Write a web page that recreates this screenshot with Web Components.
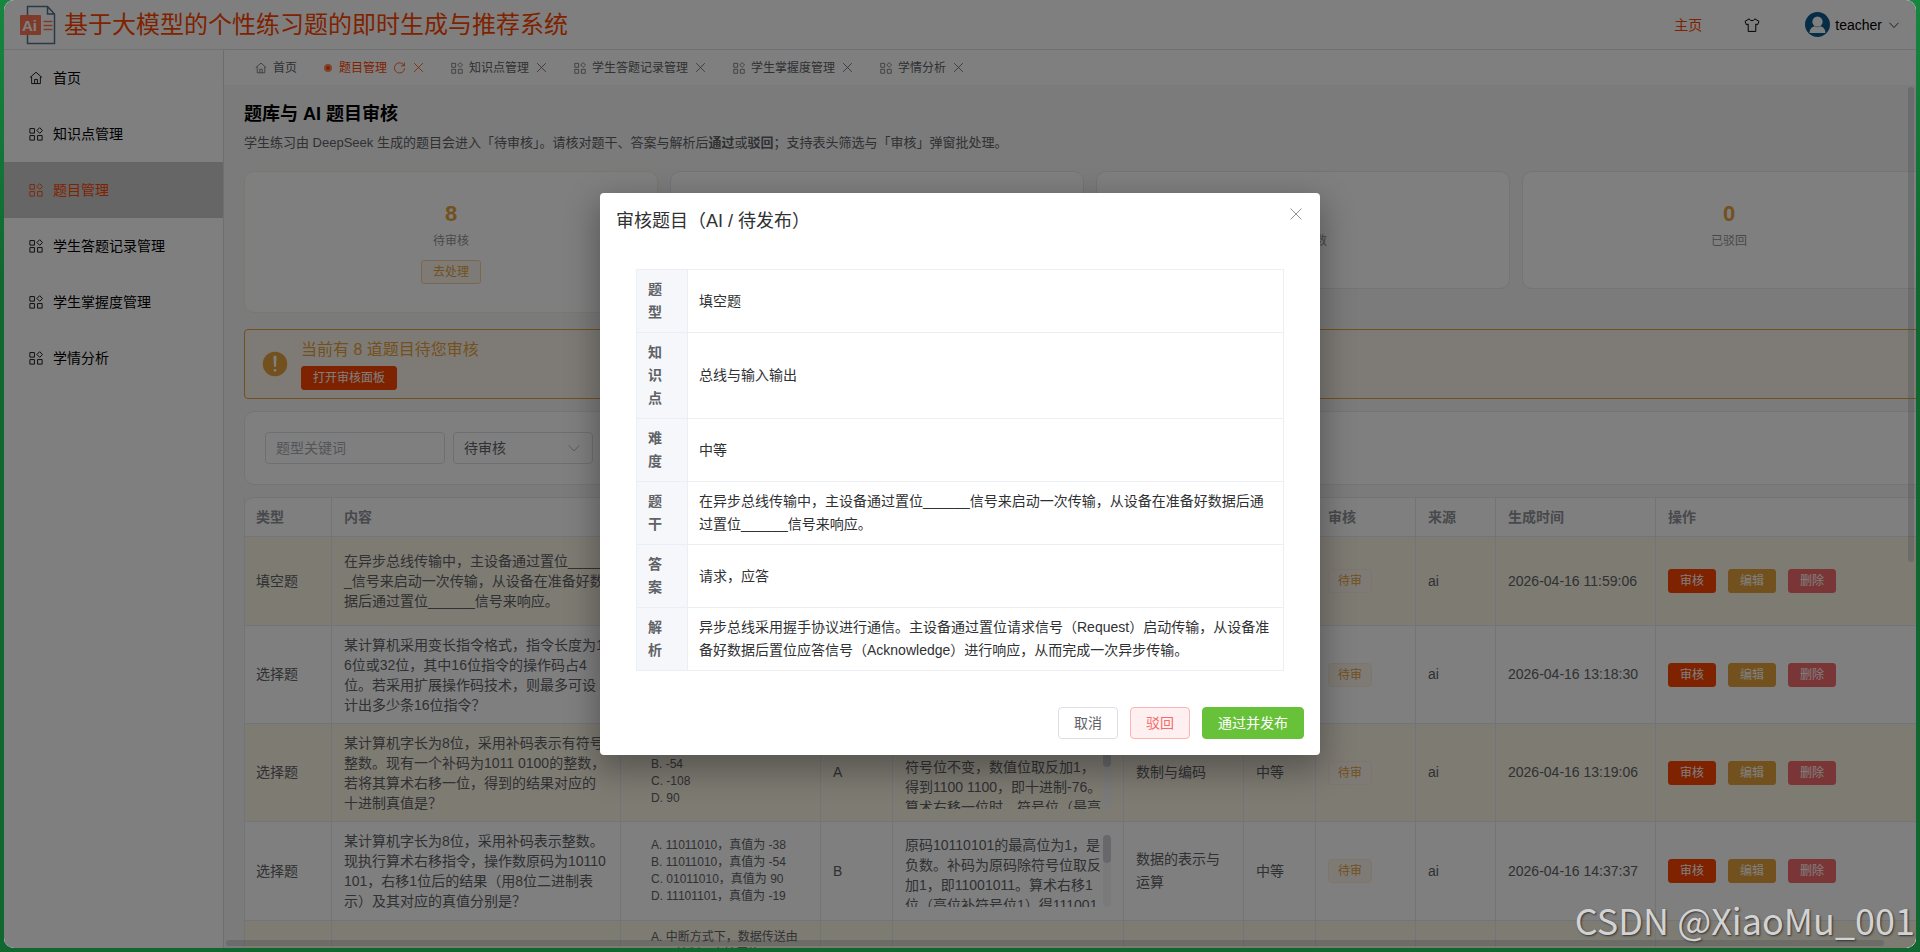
<!DOCTYPE html>
<html lang="zh-CN">
<head>
<meta charset="utf-8">
<title>题目管理</title>
<style>
  body {
    margin: 0;
    height: 100vh;
    overflow: hidden;
    background: linear-gradient(#15873f, #10672f 30%);
    font-family: "Liberation Sans", "Noto Sans CJK SC", sans-serif;
    font-size: 14px;
    line-height: 20px;
    color: #606266;
    --primary: #ff4500;
    --warning: #e6a23c;
    --danger: #f56c6c;
    --success: #67c23a;
    --line: #e6e8f0;
  }
</style>
</head>
<body>
<app-shell></app-shell>

<script>
const icons = {
  home: '<path d="M1 7.6 8 1.4l7 6.2M3 6.4v8h10v-8M6.4 14.4V9.6h3.2v4.8"/>',
  grid: '<path d="M1 1.800h5.200v5.200H1zM1 9.800h5.200V15H1zM9.800 9.800H15V15H9.800zM12.200.800l3.200 3.200-3.200 3.200L9 4z"/>',
  close: '<path d="M2.6 2.6l10.8 10.8M13.4 2.6 2.6 13.4"/>',
  down: '<path d="M2 5l6 6.4L14 5"/>',
  refresh: '<path d="M13.8 6A6.3 6.3 0 1 0 14.3 9M14 1.8V6H9.8"/>',
  shirt: '<path d="M5.2 1.8 1 4.4l1.4 3.4 1.8-.8v7.4h7.6V7l1.8.8L15 4.4l-4.2-2.6C10.200 4.200 5.800 4.200 5.200 1.800z"/>',
  warning: '<circle cx="8" cy="8" r="7" fill="currentColor" stroke="none"/><path d="M7.100 4.100a.9.9 0 0 1 1.800 0l-.3 5a.6.6 0 0 1-1.200 0z" fill="#fff" stroke="none"/><circle cx="8" cy="11.600" r=".8" fill="#fff" stroke="none"/>',
  user: '<circle cx="8" cy="8" r="8" fill="#0a5a8c" stroke="none"/><circle cx="8" cy="6.200" r="3.300" fill="#fff" stroke="none"/><path d="M2.900 13.400c0-2.600 1.600-4 3.300-4.300q1.800 1.200 3.600 0c1.700.3 3.300 1.700 3.300 4.300z" fill="#fff" stroke="none"/>'
};

function define(name, html, setup) {
  const template = document.createElement("template");
  template.innerHTML = html;
  window.customElements.define(name, class extends HTMLElement {
    constructor() {
      super();
      this._root = this.attachShadow({ mode: "open" });
    }
    connectedCallback() {
      if (this._root.childNodes.length) return;
      this._root.appendChild(template.content.cloneNode(true));
      if (setup) setup.call(this, this._root);
    }
  });
}

define("ui-icon", `
  <style>
    :host { display: inline-block; flex: none; width: 14px; height: 14px; }
    svg { display: block; width: 100%; height: 100%; fill: none; stroke: currentColor; stroke-width: 1; }
  </style>
  <svg viewBox="0 0 16 16" aria-hidden="true"></svg>
`, function (root) {
  root.querySelector("svg").innerHTML = icons[this.getAttribute("name")];
});

define("ui-button", `
  <style>
    :host { display: inline-block; }
    button {
      display: block;
      height: 32px;
      padding: 0 15px;
      border: 1px solid #dcdfe6;
      border-radius: 4px;
      background: #fff;
      color: #606266;
      font: inherit;
      font-size: 14px;
      white-space: nowrap;
      cursor: pointer;
    }
    :host([size="small"]) button { height: 24px; padding: 0 11px; font-size: 12px; border-radius: 3px; }
    :host([type="primary"]) button { background: var(--primary); border-color: var(--primary); color: #fff; }
    :host([type="warning"]) button { background: var(--warning); border-color: var(--warning); color: #fff; }
    :host([type="danger"]) button { background: var(--danger); border-color: var(--danger); color: #fff; }
    :host([type="success"]) button { background: var(--success); border-color: var(--success); color: #fff; }
    :host([type="warning"][plain]) button { background: #fdf6ec; border-color: #f3d19e; color: var(--warning); }
    :host([type="danger"][plain]) button { background: #fef0f0; border-color: #fab6b6; color: var(--danger); }
  </style>
  <button type="button"><slot></slot></button>
`);

define("app-header", `
  <style>
    :host {
      display: flex;
      align-items: center;
      box-sizing: border-box;
      height: 50px;
      padding: 0 16px;
      border-bottom: 1px solid #e4e4e7;
      background: #fff;
      color: #000;
    }
    .logo { width: 36px; height: 40px; flex: none; }
    h1 { margin: 0 auto 0 8px; font-size: 24px; line-height: 32px; font-weight: 400; color: var(--primary); }
    nav, .user { display: flex; align-items: center; }
    a { color: var(--primary); text-decoration: none; margin-right: 42px; }
    button { border: 0; background: none; padding: 0; font: inherit; color: inherit; display: flex; align-items: center; }
    .theme { margin-right: 45px; }
    .theme ui-icon { width: 16px; height: 16px; }
    .avatar { width: 25px; height: 25px; margin-right: 5px; }
    .down { width: 12px; height: 12px; margin-left: 6px; }
  </style>
  <svg class="logo" viewBox="0 0 36 40" aria-hidden="true">
    <path d="M7.500 1.500h20l7 7.500v29.500h-27zM27.500 1.500v7.500h7" fill="none" stroke="#56708a" stroke-width="1.500"/>
    <rect x="0" y="10" width="21" height="20" rx="1" fill="#ff7552"/>
    <text x="2" y="26" font-size="15" font-weight="700" fill="#fff">Ai</text>
    <path d="M23.500 16.500h9M23.500 20.500h9M23.500 24.500h9" stroke="#ff7552" stroke-width="1.500"/>
  </svg>
  <h1>基于大模型的个性练习题的即时生成与推荐系统</h1>
  <nav>
    <a href="#">主页</a>
    <button class="theme" aria-label="主题"><ui-icon name="shirt"></ui-icon></button>
    <button class="user"><ui-icon class="avatar" name="user"></ui-icon>teacher<ui-icon class="down" name="down"></ui-icon></button>
  </nav>
`);

define("side-menu", `
  <style>
    :host { display: block; box-sizing: border-box; width: 220px; flex: none; border-right: 1px solid #dedfe2; background: #fff; }
    a {
      display: flex;
      align-items: center;
      gap: 10px;
      height: 56px;
      padding-left: 25px;
      color: #000;
      text-decoration: none;
    }
    a.active { background: #ccc; color: var(--primary); }
  </style>
  <nav></nav>
`, function (root) {
  const items = ["首页", "知识点管理", "题目管理", "学生答题记录管理", "学生掌握度管理", "学情分析"];
  root.querySelector("nav").innerHTML = items.map((text, i) => `
    <a href="#" class="${text === "题目管理" ? "active" : ""}"><ui-icon name="${i ? "grid" : "home"}"></ui-icon>${text}</a>
  `).join("");
});

define("tab-bar", `
  <style>
    :host {
      display: flex;
      align-items: center;
      height: 35px;
      padding: 0 18px;
      background: #fff;
      box-shadow: 0 1px 3px rgba(0, 0, 0, .08);
      position: relative;
      font-size: 12px;
    }
    .tab { display: flex; align-items: center; gap: 6px; padding: 0 13px; }
    .active { color: var(--primary); }
    a { display: flex; align-items: center; gap: 6px; color: inherit; text-decoration: none; }
    button { display: flex; border: 0; padding: 0; background: none; color: inherit; }
    ui-icon { width: 13px; height: 13px; }
    a ui-icon { width: 12px; height: 12px; }
    .dot { width: 4px; height: 4px; margin: 0 3px; border-radius: 50%; background: var(--primary); box-shadow: 0 0 0 2px #ff8a5c; }
  </style>
`, function (root) {
  const close = `<button aria-label="关闭"><ui-icon name="close"></ui-icon></button>`;
  const tab = text => `<div class="tab"><a href="#"><ui-icon name="grid"></ui-icon>${text}</a>${close}</div>`;
  root.innerHTML += `
    <div class="tab"><a href="#"><ui-icon name="home"></ui-icon>首页</a></div>
    <div class="tab active"><a href="#"><span class="dot"></span>题目管理</a><button aria-label="刷新"><ui-icon name="refresh"></ui-icon></button>${close}</div>
  ` + ["知识点管理", "学生答题记录管理", "学生掌握度管理", "学情分析"].map(tab).join("");
});

define("stat-card", `
  <style>
    :host {
      display: block;
      padding: 27px 20px 28px;
      border: 1px solid var(--line);
      border-radius: 10px;
      background: #fff;
      text-align: center;
    }
    :host([highlight]) { border-color: #faecd8; }
    .value { font-size: 22px; line-height: 30px; font-weight: 700; color: var(--warning); }
    .label { font-size: 12px; line-height: 24px; padding-bottom: 7px; color: #909399; }
    ::slotted(ui-button) { display: block; width: fit-content; margin: 0 auto; }
  </style>
  <div class="value"></div>
  <div class="label"></div>
  <slot></slot>
`, function (root) {
  root.querySelector(".value").textContent = this.getAttribute("value");
  root.querySelector(".label").textContent = this.getAttribute("label");
});

define("review-alert", `
  <style>
    :host {
      display: flex;
      align-items: center;
      gap: 12px;
      padding: 8px 16px;
      border: 1px solid var(--warning);
      border-radius: 4px;
      background: #fdf6ec;
      color: var(--warning);
    }
    ui-icon { width: 28px; height: 28px; }
    p { margin: 0 0 4px; font-size: 16px; line-height: 24px; }
    ui-button { display: block; }
  </style>
  <ui-icon name="warning"></ui-icon>
  <div>
    <p><slot></slot></p>
    <ui-button type="primary" size="small">打开审核面板</ui-button>
  </div>
`);

define("filter-bar", `
  <style>
    :host { display: flex; gap: 8px; padding: 20px; border: 1px solid var(--line); border-radius: 10px; background: #fff; }
    input, select {
      box-sizing: border-box;
      width: 180px;
      height: 32px;
      padding: 0 10px;
      border: 1px solid #dcdfe6;
      border-radius: 4px;
      background: #fff;
      font: inherit;
      color: #606266;
    }
    input::placeholder { color: #a8abb2; }
    .select { position: relative; }
    select { width: 140px; appearance: none; }
    .select ui-icon { position: absolute; right: 12px; top: 9px; color: #a8abb2; pointer-events: none; }
  </style>
  <input type="text" placeholder="题型关键词" aria-label="题型关键词">
  <div class="select">
    <select aria-label="审核状态"><option>待审核</option></select>
    <ui-icon name="down"></ui-icon>
  </div>
`);

const questions = [
  {
    type: "填空题", height: 89,
    content: "在异步总线传输中，主设备通过置位______信号来启动一次传输，从设备在准备好数据后通过置位______信号来响应。",
    options: [], answer: "", note: "", point: "", level: "", time: "2026-04-16 11:59:06"
  },
  {
    type: "选择题", height: 98,
    content: "某计算机采用变长指令格式，指令长度为16位或32位，其中16位指令的操作码占4位。若采用扩展操作码技术，则最多可设计出多少条16位指令？",
    options: [], answer: "", note: "", point: "", level: "", time: "2026-04-16 13:18:30"
  },
  {
    type: "选择题", height: 98,
    content: "某计算机字长为8位，采用补码表示有符号整数。现有一个补码为1011 0100的整数，若将其算术右移一位，得到的结果对应的十进制真值是？",
    options: ["A. -38", "B. -54", "C. -108", "D. 90"], answer: "A",
    note: "补码1011 0100为负数，<br>符号位不变，数值位取反加1，得到1100 1100，即十进制-76。算术右移一位时，符号位（最高", bar: 30,
    point: "数制与编码", level: "中等", time: "2026-04-16 13:19:06"
  },
  {
    type: "选择题", height: 99,
    content: "某计算机字长为8位，采用补码表示整数。现执行算术右移指令，操作数原码为10110101，右移1位后的结果（用8位二进制表示）及其对应的真值分别是？",
    options: ["A. 11011010，真值为 -38", "B. 11011010，真值为 -54", "C. 01011010，真值为 90", "D. 11101101，真值为 -19"], answer: "B",
    note: "原码10110101的最高位为1，是负数。补码为原码除符号位取反加1，即11001011。算术右移1位（高位补符号位1）得111001", bar: 28,
    point: "数据的表示与运算", level: "中等", time: "2026-04-16 14:37:37"
  },
  {
    type: "选择题", height: 170, tall: true, content: "",
    options: ["A. 中断方式下，数据传送由CPU控制，直接置换"], answer: "", note: "", point: "", level: "中等", time: ""
  }
];

define("question-table", `
  <style>
    :host { display: block; }
    table {
      width: 100%;
      table-layout: fixed;
      border-collapse: separate;
      border-spacing: 0;
      border-top: 1px solid var(--line);
      border-radius: 10px 10px 0 0;
      background: #fff;
    }
    th, td { box-sizing: border-box; padding: 0 12px; border-right: 1px solid var(--line); border-bottom: 1px solid var(--line); text-align: left; line-height: 23px; }
    th:first-child, td:first-child { border-left: 1px solid var(--line); padding-left: 11px; }
    th { height: 39px; color: #909399; }
    tr.pending td { background: #fdf6e6; }
    .content, .note { line-height: 20px; word-break: break-all; }
    ul { margin: 0; padding: 0 0 0 18px; list-style: none; font-size: 12px; line-height: 17px; }
    tr.tall .options { vertical-align: top; padding-top: 8px; }
    .scroll { display: flex; height: 72px; overflow: hidden; }
    .scroll p { margin: 0; flex: 1; }
    .track { width: 8px; flex: none; border-radius: 4px; background: #f5f5f5; }
    .thumb { border-radius: 4px; background: #d0d1d4; }
    .tag { display: inline-block; padding: 0 9px; border: 1px solid #faecd8; border-radius: 4px; background: #fdf6ec; color: var(--warning); font-size: 12px; line-height: 22px; }
    .actions { display: flex; gap: 12px; }
  </style>
  <table>
    <colgroup>
      <col style="width: 88px"><col style="width: 289px"><col style="width: 200px"><col style="width: 72px">
      <col style="width: 231px"><col style="width: 120px"><col style="width: 72px"><col style="width: 100px">
      <col style="width: 80px"><col style="width: 160px"><col>
    </colgroup>
    <thead>
      <tr><th>类型</th><th>内容</th><th>选项</th><th>答案</th><th>解析</th><th>知识点</th><th>难度</th><th>审核</th><th>来源</th><th>生成时间</th><th>操作</th></tr>
    </thead>
    <tbody></tbody>
  </table>
`, function (root) {
  root.querySelector("tbody").innerHTML = questions.map((q, i) => `
    <tr class="${i % 2 ? "" : "pending"} ${q.tall ? "tall" : ""}" style="height: ${q.height}px">
      <td>${q.type}</td>
      <td class="content">${q.content}</td>
      <td class="options"><ul>${q.options.map(o => `<li>${o}</li>`).join("")}</ul></td>
      <td>${q.answer}</td>
      <td class="note">${q.note ? `<div class="scroll"><p>${q.note}</p><div class="track"><div class="thumb" style="height: ${q.bar}px"></div></div></div>` : ""}</td>
      <td>${q.point}</td>
      <td>${q.level}</td>
      <td><span class="tag">待审</span></td>
      <td>ai</td>
      <td>${q.time}</td>
      <td><div class="actions">
        <ui-button type="primary" size="small">审核</ui-button>
        <ui-button type="warning" size="small">编辑</ui-button>
        <ui-button type="danger" size="small">删除</ui-button>
      </div></td>
    </tr>
  `).join("");
});

define("question-page", `
  <style>
    :host { display: block; width: 100%; padding: 16px 20px; background: #f6f6f6; }
    h2 { margin: 0 0 6px; font-size: 18px; line-height: 26px; color: #000; }
    p { margin: 0 0 18px; font-size: 13px; line-height: 20px; }
    .stats { display: grid; grid-template-columns: repeat(4, 1fr); gap: 12px; align-items: start; margin-bottom: 16px; }
    review-alert, filter-bar { margin-bottom: 12px; }
  </style>
  <h2>题库与 AI 题目审核</h2>
  <p>学生练习由 DeepSeek 生成的题目会进入「待审核」。请核对题干、答案与解析后<b>通过</b>或<b>驳回</b>；支持表头筛选与「审核」弹窗批处理。</p>
  <div class="stats">
    <stat-card value="8" label="待审核" highlight><ui-button type="warning" size="small" plain>去处理</ui-button></stat-card>
    <stat-card value="0" label="已发布"></stat-card>
    <stat-card value="8" label="题目总数"></stat-card>
    <stat-card value="0" label="已驳回"></stat-card>
  </div>
  <review-alert>当前有 8 道题目待您审核</review-alert>
  <filter-bar></filter-bar>
  <question-table></question-table>
`);

define("review-dialog", `
  <style>
    :host {
      position: absolute;
      inset: 0;
      display: flex;
      align-items: center;
      justify-content: center;
      background: rgba(0, 0, 0, .5);
    }
    section {
      position: relative;
      box-sizing: border-box;
      width: 720px;
      padding: 16px;
      border-radius: 4px;
      background: #fff;
      box-shadow: 0 12px 32px 4px rgba(0, 0, 0, .3);
    }
    h3 { margin: 0 0 16px; font-size: 18px; line-height: 24px; font-weight: 400; color: #303133; }
    .close { position: absolute; top: 13px; right: 16px; border: 0; padding: 0; background: none; color: #909399; }
    .close ui-icon { display: block; width: 16px; height: 16px; }
    .body { padding: 20px; }
    table { width: 100%; border-collapse: collapse; line-height: 23px; color: #303133; }
    th, td { padding: 8px 11px; border: 1px solid #ebeef5; text-align: left; }
    th { width: 28px; background: #f5f7fa; color: #606266; }
    th span { display: block; width: 14px; }
    footer { display: flex; justify-content: flex-end; gap: 12px; padding-top: 16px; }
  </style>
  <section role="dialog" aria-modal="true">
    <h3>审核题目（AI / 待发布）</h3>
    <button class="close" aria-label="关闭"><ui-icon name="close"></ui-icon></button>
    <div class="body">
      <table>
        <tr><th><span>题型</span></th><td>填空题</td></tr>
        <tr><th><span>知识点</span></th><td>总线与输入输出</td></tr>
        <tr><th><span>难度</span></th><td>中等</td></tr>
        <tr><th><span>题干</span></th><td>在异步总线传输中，主设备通过置位______信号来启动一次传输，从设备在准备好数据后通过置位______信号来响应。</td></tr>
        <tr><th><span>答案</span></th><td>请求，应答</td></tr>
        <tr><th><span>解析</span></th><td>异步总线采用握手协议进行通信。主设备通过置位请求信号（Request）启动传输，从设备准备好数据后置位应答信号（Acknowledge）进行响应，从而完成一次异步传输。</td></tr>
      </table>
    </div>
    <footer>
      <ui-button>取消</ui-button>
      <ui-button type="danger" plain>驳回</ui-button>
      <ui-button type="success">通过并发布</ui-button>
    </footer>
  </section>
`);

define("app-shell", `
  <style>
    :host { display: block; box-sizing: border-box; height: 100vh; padding: 0 4px 4px; }
    .window {
      position: relative;
      display: flex;
      flex-direction: column;
      height: 100%;
      overflow: hidden;
      border-radius: 10px;
      background: #fff;
    }
    .layout { display: flex; flex: 1; min-height: 0; }
    main { display: flex; flex-direction: column; flex: 1; min-width: 0; }
    .view { position: relative; flex: 1; min-height: 0; overflow: hidden; }
    .bar { position: absolute; border-radius: 4px; background: rgba(144, 147, 153, .3); }
    .bar.y { top: 2px; right: 2px; width: 6px; height: 55%; }
    .bar.x { left: 2px; bottom: 2px; height: 6px; width: 98%; }
    .watermark {
      position: absolute;
      right: 1px;
      bottom: 5px;
      font-family: "Noto Sans CJK SC", sans-serif;
      font-size: 36px;
      line-height: 48px;
      color: #d2d2d2;
      text-shadow: 1px 1px 2px #333;
    }
  </style>
  <div class="window">
    <app-header></app-header>
    <div class="layout">
      <side-menu></side-menu>
      <main>
        <tab-bar></tab-bar>
        <div class="view">
          <question-page></question-page>
          <div class="bar y"></div>
          <div class="bar x"></div>
        </div>
      </main>
    </div>
    <review-dialog></review-dialog>
    <div class="watermark">CSDN @XiaoMu_001</div>
  </div>
`);
</script>
</body>
</html>
